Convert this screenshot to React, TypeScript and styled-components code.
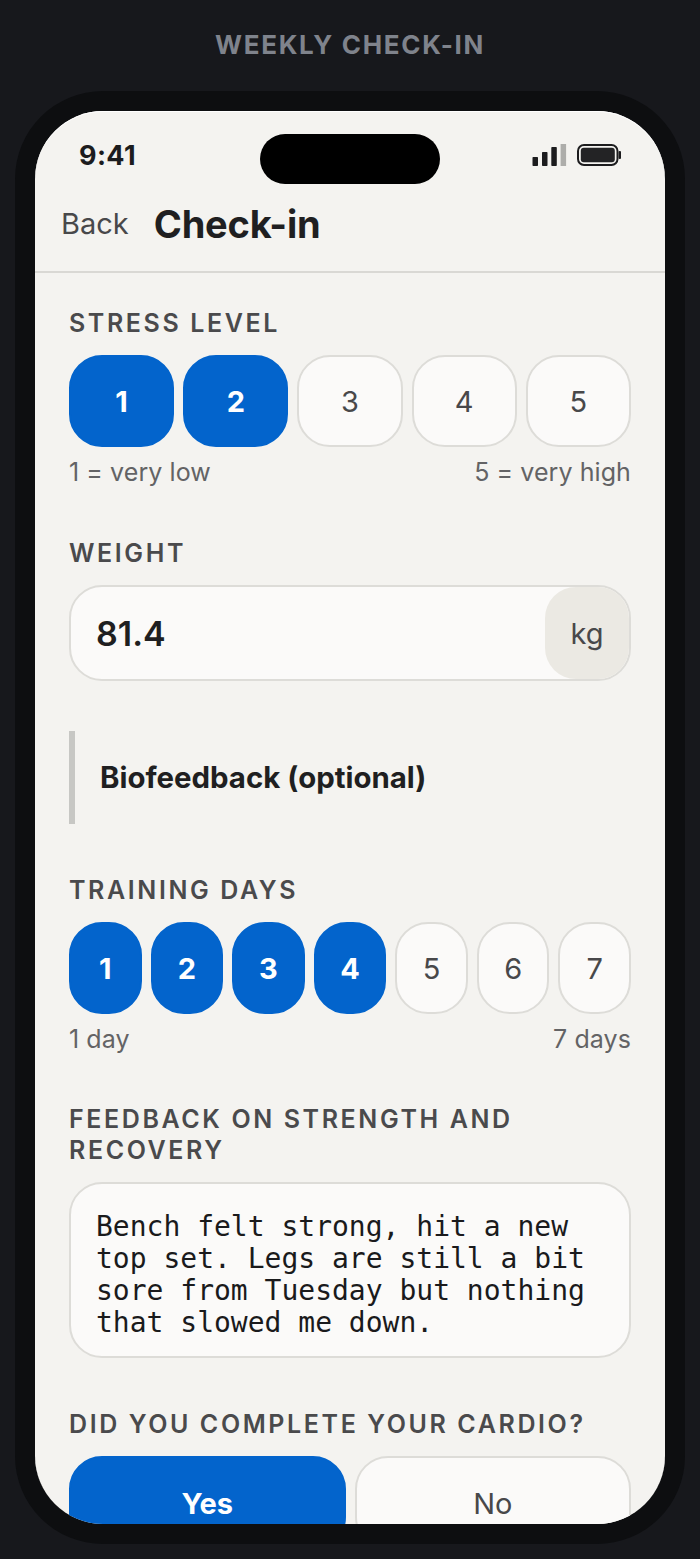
import React from 'react';
import styled, { createGlobalStyle } from 'styled-components';

const GlobalStyle = createGlobalStyle`
  html, body {
    margin: 0;
    padding: 0;
    background: #17181c;
  }
  * {
    box-sizing: border-box;
  }
`;

const Page = styled.div`
  width: 700px;
  height: 1559px;
  padding: 0 15px 15px;
  display: flex;
  flex-direction: column;
  background: #17181c;
  font-family: 'Inter', sans-serif;
  overflow: hidden;
`;

const PageTitle = styled.div`
  height: 91px;
  padding-top: 28px;
  text-align: center;
  font-size: 26px;
  line-height: 34px;
  font-weight: 700;
  letter-spacing: 1.7px;
  color: #7f838c;
`;

const Phone = styled.div`
  flex: 1;
  min-height: 0;
  padding: 20px;
  border-radius: 88px;
  background: #0d0e10;
  display: flex;
`;

const Screen = styled.div`
  flex: 1;
  min-width: 0;
  border-radius: 68px;
  background: #f4f3f0;
  box-shadow: inset 0 1px 0 #ffffff;
  overflow: hidden;
`;

const StatusBar = styled.div`
  height: 73px;
  padding: 23px 44px 0;
  display: grid;
  grid-template-columns: 1fr 180px 1fr;
  align-items: start;
`;

const Time = styled.div`
  font-size: 27px;
  line-height: 44px;
  font-weight: 700;
  color: #1c1c1e;
  letter-spacing: 0.4px;
`;

const Island = styled.div`
  height: 50px;
  border-radius: 25px;
  background: #000;
`;

const StatusIcons = styled.div`
  height: 44px;
  display: flex;
  justify-content: flex-end;
  align-items: flex-start;
  padding-top: 10px;
`;

const NavBar = styled.div`
  height: 89px;
  padding: 0 26px 8px;
  display: flex;
  align-items: center;
  gap: 25px;
  border-bottom: 2px solid #d9d8d4;
`;

const BackLabel = styled.span`
  font-size: 29px;
  color: #48484a;
`;

const NavTitle = styled.span`
  font-size: 38px;
  font-weight: 700;
  color: #1f1f21;
  letter-spacing: -0.2px;
`;

const Content = styled.div`
  padding: 35px 34px 0;
  display: flex;
  flex-direction: column;
`;

const Field = styled.div<{ $after?: number }>`
  margin-bottom: ${(p) => p.$after ?? 50}px;
`;

const FieldLabel = styled.div`
  font-size: 25px;
  line-height: 31px;
  font-weight: 600;
  letter-spacing: 2.6px;
  color: #4a4a4c;
  margin-bottom: 16px;
`;

const ScaleRow = styled.div`
  display: flex;
  gap: 9px;
`;

const ScaleButton = styled.div<{ $active?: boolean }>`
  flex: 1;
  height: 92px;
  border-radius: 33px;
  display: flex;
  align-items: center;
  justify-content: center;
  font-size: 29px;
  font-weight: ${(p) => (p.$active ? 700 : 400)};
  color: ${(p) => (p.$active ? '#ffffff' : '#48484a')};
  background: ${(p) => (p.$active ? '#0364cc' : '#fbfaf9')};
  border: 2px solid ${(p) => (p.$active ? '#0364cc' : '#dddcd8')};
`;

const ScaleHints = styled.div`
  margin-top: 9px;
  display: flex;
  justify-content: space-between;
  font-size: 25px;
  line-height: 32px;
  letter-spacing: 0.08px;
  color: #636365;
`;

const InputBox = styled.div`
  height: 96px;
  border-radius: 33px;
  border: 2px solid #dddcd8;
  background: #fbfaf9;
  display: flex;
  align-items: stretch;
  overflow: hidden;
`;

const InputValue = styled.div`
  flex: 1;
  padding-left: 25px;
  display: flex;
  align-items: center;
  font-size: 34px;
  font-weight: 600;
  color: #1f1f21;
`;

const InputUnit = styled.div`
  width: 84px;
  border-radius: 31px 0 0 31px;
  background: #ebe9e3;
  display: flex;
  align-items: center;
  justify-content: center;
  font-size: 29px;
  color: #48484a;
`;

const SectionHeading = styled.div`
  height: 93px;
  margin-bottom: 51px;
  padding-left: 25px;
  border-left: 6px solid #c7c7c4;
  display: flex;
  align-items: center;
  font-size: 29.4px;
  font-weight: 700;
  color: #1f1f21;
`;

const TextBox = styled.div`
  height: 176px;
  padding: 27px 25px 0;
  border-radius: 33px;
  border: 2px solid #dddcd8;
  background: #fbfaf9;
  font-family: 'DejaVu Sans Mono', monospace;
  font-size: 28px;
  line-height: 32px;
  color: #1a1a1c;
`;

const ChoiceRow = styled.div`
  display: flex;
  gap: 9px;
`;

const ChoiceButton = styled.div<{ $active?: boolean }>`
  flex: 1;
  height: 94px;
  border-radius: 33px;
  display: flex;
  align-items: center;
  justify-content: center;
  font-size: 29px;
  font-weight: ${(p) => (p.$active ? 700 : 400)};
  color: ${(p) => (p.$active ? '#ffffff' : '#48484a')};
  background: ${(p) => (p.$active ? '#0364cc' : '#fbfaf9')};
  border: 2px solid ${(p) => (p.$active ? '#0364cc' : '#dddcd8')};
`;

const SignalIcon = () => (
  <svg width="35" height="22" viewBox="0 0 35 22">
    <rect x="0.5" y="13" width="5.5" height="9" rx="0.8" fill="#1c1c1e" />
    <rect x="10" y="8" width="5.5" height="14" rx="0.8" fill="#1c1c1e" />
    <rect x="19.3" y="3" width="5.5" height="19" rx="0.8" fill="#1c1c1e" />
    <rect x="28.6" y="0" width="5.5" height="22" fill="#adadaa" />
  </svg>
);

const BatteryIcon = () => (
  <svg width="44" height="22" viewBox="0 0 44 22" style={{ marginLeft: 10 }}>
    <rect x="1" y="1" width="39.5" height="20" rx="6" fill="none" stroke="#1c1c1e" strokeWidth="2" />
    <rect x="3.8" y="3.8" width="34" height="14.4" rx="3" fill="#232325" />
    <rect x="41.6" y="7" width="2.4" height="8" rx="1" fill="#1c1c1e" />
  </svg>
);

const STRESS = [1, 2, 3, 4, 5];
const DAYS = [1, 2, 3, 4, 5, 6, 7];

const App: React.FC = () => {
  return (
    <Page>
      <GlobalStyle />
      <PageTitle>WEEKLY CHECK-IN</PageTitle>
      <Phone>
        <Screen>
          <StatusBar>
            <Time>9:41</Time>
            <Island />
            <StatusIcons>
              <SignalIcon />
              <BatteryIcon />
            </StatusIcons>
          </StatusBar>

          <NavBar>
            <BackLabel>Back</BackLabel>
            <NavTitle>Check-in</NavTitle>
          </NavBar>

          <Content>
            <Field>
              <FieldLabel>STRESS LEVEL</FieldLabel>
              <ScaleRow>
                {STRESS.map((n) => (
                  <ScaleButton key={n} $active={n <= 2}>{n}</ScaleButton>
                ))}
              </ScaleRow>
              <ScaleHints>
                <span>1 = very low</span>
                <span>5 = very high</span>
              </ScaleHints>
            </Field>

            <Field>
              <FieldLabel>WEIGHT</FieldLabel>
              <InputBox>
                <InputValue>81.4</InputValue>
                <InputUnit>kg</InputUnit>
              </InputBox>
            </Field>

            <SectionHeading>Biofeedback (optional)</SectionHeading>

            <Field $after={49}>
              <FieldLabel>TRAINING DAYS</FieldLabel>
              <ScaleRow>
                {DAYS.map((n) => (
                  <ScaleButton key={n} $active={n <= 4}>{n}</ScaleButton>
                ))}
              </ScaleRow>
              <ScaleHints>
                <span>1 day</span>
                <span>7 days</span>
              </ScaleHints>
            </Field>

            <Field $after={51}>
              <FieldLabel>FEEDBACK ON STRENGTH AND RECOVERY</FieldLabel>
              <TextBox>
                Bench felt strong, hit a new top set. Legs are still a bit sore from Tuesday but nothing that slowed me down.
              </TextBox>
            </Field>

            <Field>
              <FieldLabel>DID YOU COMPLETE YOUR CARDIO?</FieldLabel>
              <ChoiceRow>
                <ChoiceButton $active>Yes</ChoiceButton>
                <ChoiceButton>No</ChoiceButton>
              </ChoiceRow>
            </Field>
          </Content>
        </Screen>
      </Phone>
    </Page>
  );
};

export default App;
